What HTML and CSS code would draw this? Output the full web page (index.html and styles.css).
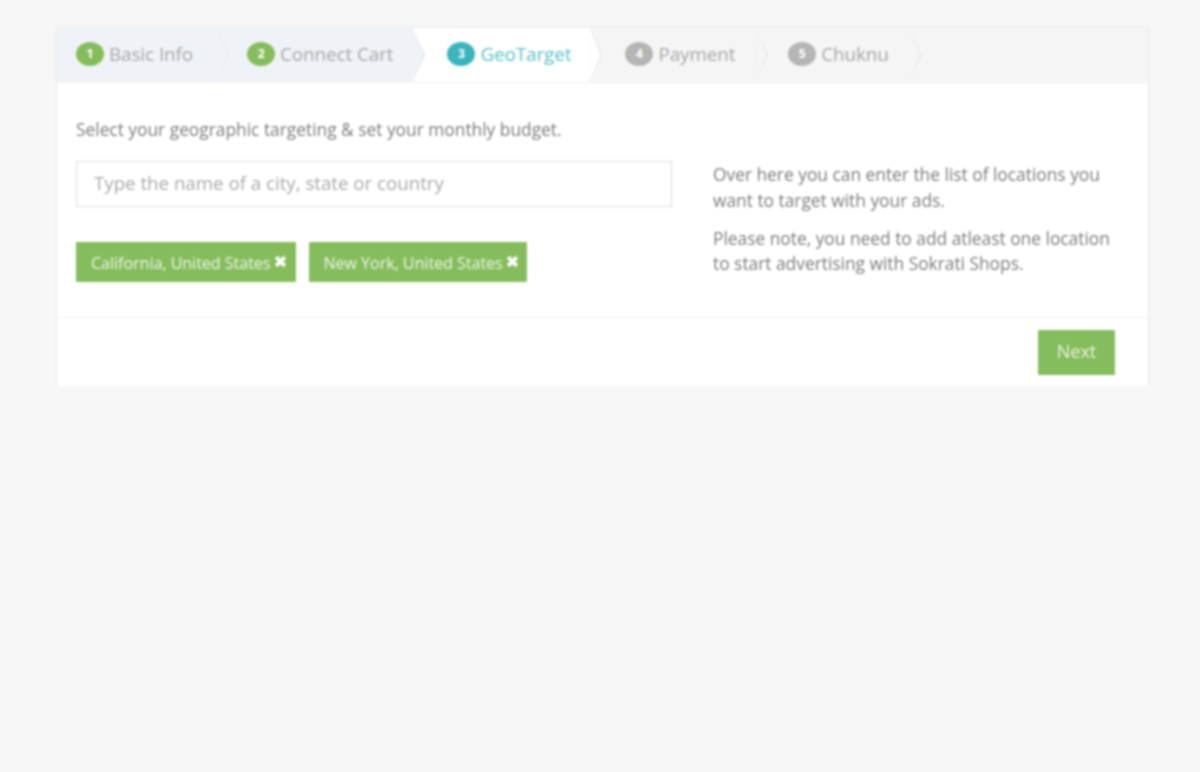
FILE: index.html
```html
<!DOCTYPE html>
<html lang="en">
<head>
  <meta charset="UTF-8" />
  <title>GeoTarget</title>
  <link rel="stylesheet" href="styles.css">
</head>
<body>
  <div class="wizard">
    <!-- Steps -->
    <ul class="steps">
      <li class="step done step-first"><span class="num">1</span>Basic Info</li>
      <li class="step done step-cart"><span class="num">2</span>Connect Cart</li>
      <li class="step active"><span class="num">3</span>GeoTarget</li>
      <li class="step step-payment"><span class="num">4</span>Payment</li>
      <li class="step step-last"><span class="num">5</span>Chuknu</li>
    </ul>

    <section class="panel">
      <div class="panel-left">
        <p class="lead">Select your geographic targeting &amp; set your monthly budget.</p>
        <input class="location" type="text" placeholder="Type the name of a city, state or country">
        <div class="tags">
          <span class="tag">California, United States
            <svg class="tag-x" viewBox="0 0 12 12"><path d="M2 2l8 8M10 2l-8 8"/></svg>
          </span>
          <span class="tag tag-ny">New York, United States
            <svg class="tag-x" viewBox="0 0 12 12"><path d="M2 2l8 8M10 2l-8 8"/></svg>
          </span>
        </div>
      </div>
      <div class="panel-right">
        <p>Over here you can enter the list of locations you want to target with your ads.</p>
        <p>Please note, you need to add atleast one location to start advertising with Sokrati Shops.</p>
      </div>
    </section>

    <footer class="actions">
      <button class="next" type="button">Next</button>
    </footer>
  </div>
</body>
</html>
```

FILE: styles.css
```css
body, ul, li, p {
  margin: 0;
  padding: 0;
}

body {
  background-color: #f7f7f7;
  color: #7d7d7d;
  font-family: 'Open Sans', sans-serif;
  font-size: 17.35px;
  padding: 28px 52px 0 57px;
}

.wizard {
  background-color: #fff;
  box-shadow: 0 0 3px #dcdcdc;
  filter: blur(0.9px);
}

.steps {
  display: flex;
  height: 55px;
  list-style: none;
  background-color: #f5f5f5;
  border-bottom: 1px solid #f0f0f0;
  box-sizing: border-box;
}

.step {
  position: relative;
  display: flex;
  align-items: center;
  padding: 0 18px 4px 35px;
  font-size: 18.7px;
  color: #aaa;
  background-color: #f5f5f5;
}

.step::before,
.step::after {
  content: "";
  position: absolute;
  top: 0;
  left: 100%;
  height: 100%;
  clip-path: polygon(0 0, 100% 50%, 0 100%);
}

.step::before {
  width: 13px;
  background-color: #e9ebed;
  z-index: 1;
}

.step::after {
  width: 11px;
  background-color: inherit;
  z-index: 2;
}

.step-first {
  padding: 0 23px 4px 19px;
}

.step-cart {
  padding: 0 19px 4px 31px;
}

.step-payment {
  padding: 0 20px 4px 36px;
}

.step-last {
  padding: 0 20px 4px 33px;
}

.done {
  background-color: #eff3f7;
}

.active {
  background-color: #fff;
  color: #5cc4c9;
}

.num {
  width: 28px;
  height: 24px;
  margin: 2px 5px 0 0;
  border-radius: 50%;
  background-color: #b5b5b5;
  color: #fff;
  font-size: 12px;
  font-weight: 700;
  line-height: 24px;
  text-align: center;
}

.done .num {
  background-color: #85bd5d;
}

.active .num {
  background-color: #3bb4bd;
}

.panel {
  display: grid;
  grid-template-columns: 596px 402px;
  column-gap: 41px;
  height: 235px;
  padding: 0 0 0 19px;
  border-bottom: 1px solid #f3f3f3;
  box-sizing: border-box;
}

.lead {
  margin: 34px 0 20px;
  line-height: 24px;
}

.location {
  display: block;
  box-sizing: border-box;
  width: 100%;
  height: 46px;
  padding: 0 17px 4px;
  border: 1px solid #dedede;
  font-family: inherit;
  font-size: 18.7px;
  color: #777;
}

.location::placeholder {
  color: #aaa;
}

.tags {
  display: flex;
  gap: 13px;
  margin-top: 35px;
}

.tag {
  display: flex;
  align-items: center;
  height: 40px;
  padding: 2px 9px 0 15px;
  box-sizing: border-box;
  background-color: #85bd5d;
  color: #e9f4e0;
  font-size: 16px;
  border-radius: 1px;
}

.tag-ny {
  padding: 2px 8px 0 14px;
}

.tag-ny .tag-x {
  margin-left: 3px;
}

.tag-x {
  width: 13px;
  height: 13px;
  margin: 0 0 4px 4px;
  stroke: #fff;
  stroke-width: 3.5;
  fill: none;
}

.panel-right {
  padding-top: 79px;
  line-height: 25.5px;
}

.panel-right p {
  margin-bottom: 12.5px;
}

.actions {
  display: flex;
  justify-content: flex-end;
  height: 69px;
  padding: 12px 33px 0 0;
  box-sizing: border-box;
}

.next {
  width: 77px;
  height: 45px;
  padding-bottom: 5px;
  border: 0;
  border-radius: 1px;
  background-color: #85bd5d;
  color: #e9f4e0;
  font-family: inherit;
  font-size: 18px;
}
```
